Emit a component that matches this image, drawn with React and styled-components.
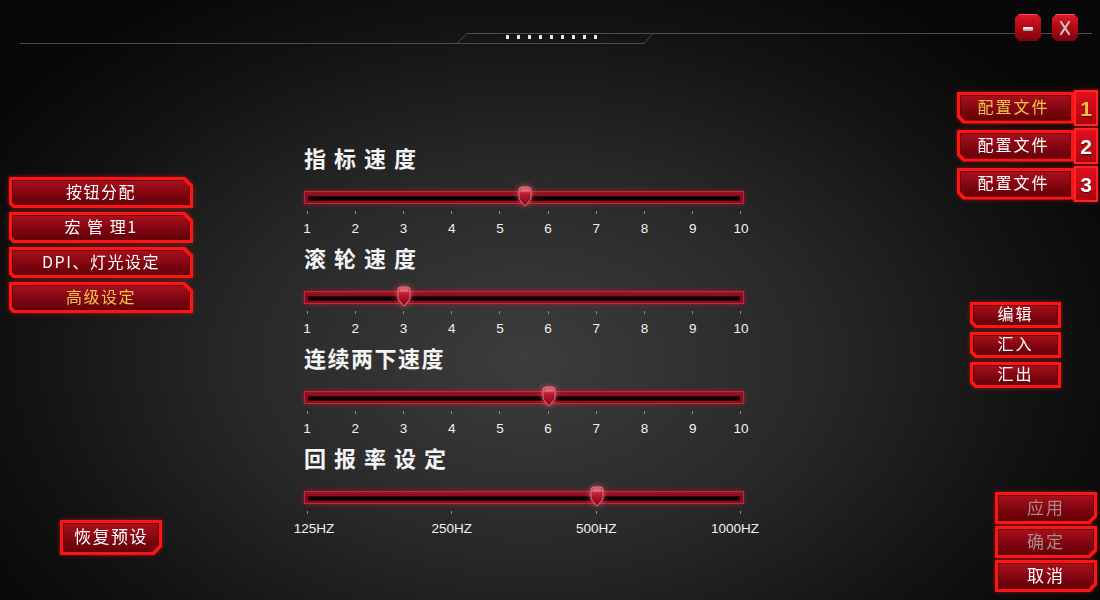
import React from 'react'
import styled, { createGlobalStyle, css } from 'styled-components'

const GlobalStyle = createGlobalStyle`
  html, body {
    margin: 0;
    padding: 0;
    background: #000;
  }
  body {
    font-family: "Liberation Sans", "Noto Sans CJK SC", sans-serif;
  }
  button {
    font-family: inherit;
  }
`

const clip = (shape, n) => {
  switch (shape) {
    case 'tab':
      return `polygon(0 0, calc(100% - ${n + 4}px) 0, 100% ${n + 4}px, 100% 100%, ${n}px 100%, 0 calc(100% - ${n}px))`
    case 'left':
      return `polygon(0 0, 100% 0, 100% 100%, ${n}px 100%, 0 calc(100% - ${n}px))`
    case 'right':
      return `polygon(0 0, 100% 0, 100% calc(100% - ${n}px), calc(100% - ${n}px) 100%, 0 100%)`
    default:
      return 'none'
  }
}

const menu = ['按钮分配', '宏 管 理1', 'DPI、灯光设定', '高级设定']
const profiles = [1, 2, 3]
const tools = ['编辑', '汇入', '汇出']
const actions = [
  { label: '应用', off: true },
  { label: '确定', off: true },
  { label: '取消', off: false },
]
const numbers = ['1', '2', '3', '4', '5', '6', '7', '8', '9', '10']
const sliders = [
  { title: '指 标 速 度', value: 4.5, steps: 9, labels: numbers },
  { title: '滚 轮 速 度', value: 2, steps: 9, labels: numbers },
  { title: '连续两下速度', value: 5, steps: 9, labels: numbers },
  { title: '回 报 率 设 定', value: 2, steps: 3, labels: ['125HZ', '250HZ', '500HZ', '1000HZ'], shift: [7, 0, 0, -6] },
]

const Window = styled.div`
  position: relative;
  width: 1100px;
  height: 600px;
  overflow: hidden;
  display: flex;
  flex-direction: column;
  background:
    radial-gradient(ellipse 58% 72% at 48% 60%, #3d3d3d 0%, #282828 45%, #131313 78%, #080808 100%);
  color: #fff;
`

const Header = styled.header`
  position: relative;
  height: 60px;
  flex: none;
  svg.deco {
    display: block;
  }
`

const WindowControls = styled.div`
  position: absolute;
  top: 14px;
  right: 22px;
  display: flex;
  gap: 11px;
`

const WinButton = styled.button`
  width: 26px;
  height: 27px;
  padding: 0;
  border: none;
  cursor: pointer;
  display: flex;
  align-items: center;
  justify-content: center;
  clip-path: polygon(4px 0, calc(100% - 4px) 0, 100% 4px, 100% calc(100% - 4px), calc(100% - 4px) 100%, 4px 100%, 0 calc(100% - 4px), 0 4px);
  background: linear-gradient(180deg, #e21a28 0%, #b40a16 45%, #7c0410 100%);
  box-shadow: inset 0 1px 0 rgba(255, 140, 140, 0.5);
`

const Body = styled.main`
  flex: 1;
  display: grid;
  grid-template-columns: 200px 750px 150px;
`

const LeftColumn = styled.nav`
  display: flex;
  flex-direction: column;
  padding-left: 9px;
`

const ButtonStack = styled.div`
  display: flex;
  flex-direction: column;
  gap: ${p => p.$gap}px;
  width: ${p => p.$width}px;
  margin-top: ${p => p.$top}px;
  margin-left: ${p => p.$left || 0}px;
  filter: drop-shadow(0 0 2px rgba(255, 20, 20, 0.55));
`

const ChamferButton = styled.button`
  display: flex;
  width: 100%;
  height: ${p => p.$h}px;
  padding: ${p => p.$border || 2}px;
  border: none;
  cursor: pointer;
  background: #ff1414;
  clip-path: ${p => clip(p.$shape, p.$cut)};
`

const Face = styled.span`
  flex: 1;
  display: flex;
  align-items: center;
  justify-content: center;
  padding-bottom: 4px;
  clip-path: ${p => clip(p.$shape, p.$cut - 1)};
  background: linear-gradient(180deg, #a8111d 0%, #8e0914 38%, #75040e 70%, #650209 100%);
  box-shadow: inset 0 0 0 1px rgba(90, 0, 6, 0.8);
  color: ${p => (p.$tone === 'gold' ? '#f2c64a' : p.$tone === 'off' ? '#a88a8a' : '#ffffff')};
  font-family: "Noto Sans CJK SC", "Liberation Sans", sans-serif;
  font-size: ${p => p.$size || 16}px;
  letter-spacing: ${p => p.$spacing ?? 1}px;
  line-height: 1;
  white-space: nowrap;
  ${p => p.$pad && css`padding-right: ${p.$pad}px;`}
`

const ResetWrap = styled.div`
  margin-top: 207px;
  margin-left: 51px;
  width: 102px;
  filter: drop-shadow(0 0 2px rgba(255, 20, 20, 0.55));
`

const Center = styled.section`
  padding-left: 104px;
  padding-top: 84px;
  display: flex;
  flex-direction: column;
`

const SliderBlock = styled.div`
  width: 440px;
  height: 100px;
`

const SliderTitle = styled.h2`
  margin: 0;
  height: 26px;
  font-family: "Noto Sans CJK SC", "Liberation Sans", sans-serif;
  font-size: 22px;
  line-height: 26px;
  font-weight: 700;
  letter-spacing: 1.5px;
  color: #f4f4f4;
  white-space: pre;
`

const Track = styled.div`
  position: relative;
  margin-top: 21px;
  height: 13px;
  box-sizing: border-box;
  padding: 4px 3px;
  background: linear-gradient(180deg, #9a1424 0%, #7c0c1a 50%, #8c1020 100%);
  border: 1px solid #c2283a;
  box-shadow: 0 0 5px rgba(230, 20, 50, 0.55);
`

const Groove = styled.div`
  height: 3px;
  background: #080002;
  border: 1px solid #3a0208;
`

const Thumb = styled.svg`
  position: absolute;
  top: -6px;
  width: 14px;
  height: 21px;
  filter: drop-shadow(0 0 3px rgba(255, 90, 110, 0.8));
`

const Scale = styled.div`
  display: flex;
  justify-content: space-between;
  margin: 7px 3px 0;
`

const ScaleItem = styled.div`
  width: 0;
  display: flex;
  flex-direction: column;
  align-items: center;
`

const Tick = styled.span`
  width: 1px;
  height: 3px;
  background: #8a8a8a;
  flex: none;
`

const ScaleLabel = styled.span`
  margin-top: 7px;
  font-size: 13.5px;
  line-height: 15px;
  color: #f2f2f2;
  white-space: nowrap;
  transform: translateX(${p => p.$shift || 0}px);
`

const RightColumn = styled.aside`
  display: flex;
  flex-direction: column;
`

const ProfileList = styled.div`
  margin-top: 29px;
  margin-left: 7px;
  display: flex;
  flex-direction: column;
  gap: 1px;
  filter: drop-shadow(0 0 2px rgba(255, 20, 20, 0.55));
`

const ProfileRow = styled.div`
  display: flex;
  align-items: center;
  height: 37px;
`

const ProfileButtonWrap = styled.div`
  width: 117px;
`

const NumberBox = styled.span`
  width: 24px;
  height: 36px;
  box-sizing: border-box;
  border: 2px solid #ff2424;
  background: linear-gradient(180deg, #e0101e 0%, #c40814 60%, #a80610 100%);
  display: flex;
  align-items: center;
  justify-content: center;
  padding-top: 3px;
  font-family: "Liberation Sans", sans-serif;
  font-weight: 700;
  font-size: 21px;
  color: ${p => (p.$active ? '#f0c048' : '#ffffff')};
  text-shadow: 0 1px 1px rgba(60, 0, 0, 0.8);
`

const MinusIcon = () => (
  <svg width="14" height="14" viewBox="0 0 14 14">
    <defs>
      <linearGradient id="mg" x1="0" y1="0" x2="0" y2="1">
        <stop offset="0" stopColor="#ffffff" />
        <stop offset="1" stopColor="#9a9a9a" />
      </linearGradient>
    </defs>
    <rect x="2" y="6" width="10" height="4" rx="1" fill="url(#mg)" />
  </svg>
)

const CloseIcon = () => (
  <svg width="14" height="16" viewBox="0 0 14 16">
    <path d="M3 2 L11 14 M11 2 L3 14" stroke="#c8c8c8" strokeWidth="2.2" strokeLinecap="round" />
  </svg>
)

const HeaderDeco = () => (
  <svg className="deco" width="1100" height="60" viewBox="0 0 1100 60">
    <path d="M20 43.5 H644 L653 33.5" fill="none" stroke="#4c4c4c" strokeWidth="1" />
    <path d="M457 43.5 L467 33.5 H1092" fill="none" stroke="#4c4c4c" strokeWidth="1" />
    {Array.from({ length: 9 }).map((_, i) => (
      <rect key={i} x={506 + i * 11} y={35} width="3" height="4" fill="#e8e8e8" />
    ))}
  </svg>
)

const ThumbShape = ({ left }) => (
  <Thumb viewBox="0 0 14 21" style={{ left }}>
    <defs>
      <linearGradient id="tg" x1="0" y1="0" x2="0" y2="1">
        <stop offset="0" stopColor="#d84a5a" />
        <stop offset="0.45" stopColor="#b3192c" />
        <stop offset="1" stopColor="#7c0616" />
      </linearGradient>
    </defs>
    <path d="M1 4 Q1 1 4 1 H10 Q13 1 13 4 V13 L7 20 L1 13 Z" fill="url(#tg)" stroke="#f08894" strokeWidth="0.8" />
    <path d="M2.5 4 Q2.5 2.5 4 2.5 H10 Q11.5 2.5 11.5 4 V6 H2.5 Z" fill="rgba(255,200,210,0.35)" />
  </Thumb>
)

const Slider = ({ title, value, steps, labels, shift = [] }) => {
  const x = 3 + (value / steps) * 434 - 7
  return (
    <SliderBlock>
      <SliderTitle>{title}</SliderTitle>
      <Track>
        <Groove />
        <ThumbShape left={x} />
      </Track>
      <Scale>
        {labels.map((label, i) => (
          <ScaleItem key={label}>
            <Tick />
            <ScaleLabel $shift={shift[i]}>{label}</ScaleLabel>
          </ScaleItem>
        ))}
      </Scale>
    </SliderBlock>
  )
}

const App = () => {
  return (
    <>
      <GlobalStyle />
      <Window>
        <Header>
          <HeaderDeco />
          <WindowControls>
            <WinButton aria-label="minimize"><MinusIcon /></WinButton>
            <WinButton aria-label="close"><CloseIcon /></WinButton>
          </WindowControls>
        </Header>
        <Body>
          <LeftColumn>
            <ButtonStack $gap={4} $width={184} $top={117}>
              {menu.map((item, i) => (
                <ChamferButton key={item} $h={31} $shape="tab" $cut={4} $border={3}>
                  <Face $shape="tab" $cut={4} $tone={i === 3 ? 'gold' : 'white'} $size={16} $spacing={1.5}>
                    {item}
                  </Face>
                </ChamferButton>
              ))}
            </ButtonStack>
            <ResetWrap>
              <ChamferButton $h={35} $shape="right" $cut={8} $border={3}>
                <Face $shape="right" $cut={8} $size={17} $spacing={1.5}>恢复预设</Face>
              </ChamferButton>
            </ResetWrap>
          </LeftColumn>

          <Center>
            {sliders.map(s => (
              <Slider key={s.title} {...s} />
            ))}
          </Center>

          <RightColumn>
            <ProfileList>
              {profiles.map(n => (
                <ProfileRow key={n}>
                  <ProfileButtonWrap>
                    <ChamferButton $h={32} $shape="left" $cut={6} $border={3}>
                      <Face $shape="left" $cut={6} $tone={n === 1 ? 'gold' : 'white'} $size={16} $spacing={2} $pad={4}>
                        配置文件
                      </Face>
                    </ChamferButton>
                  </ProfileButtonWrap>
                  <NumberBox $active={n === 1}>{n}</NumberBox>
                </ProfileRow>
              ))}
            </ProfileList>

            <ButtonStack $gap={4} $width={91} $top={100} $left={20}>
              {tools.map(t => (
                <ChamferButton key={t} $h={26} $shape="left" $cut={5} $border={3}>
                  <Face $shape="left" $cut={5} $size={16} $spacing={2}>{t}</Face>
                </ChamferButton>
              ))}
            </ButtonStack>

            <ButtonStack $gap={2} $width={102} $top={104} $left={45}>
              {actions.map(a => (
                <ChamferButton key={a.label} $h={32} $shape="right" $cut={7} $border={3}>
                  <Face $shape="right" $cut={7} $tone={a.off ? 'off' : 'white'} $size={17} $spacing={2}>
                    {a.label}
                  </Face>
                </ChamferButton>
              ))}
            </ButtonStack>
          </RightColumn>
        </Body>
      </Window>
    </>
  )
}

export default App
